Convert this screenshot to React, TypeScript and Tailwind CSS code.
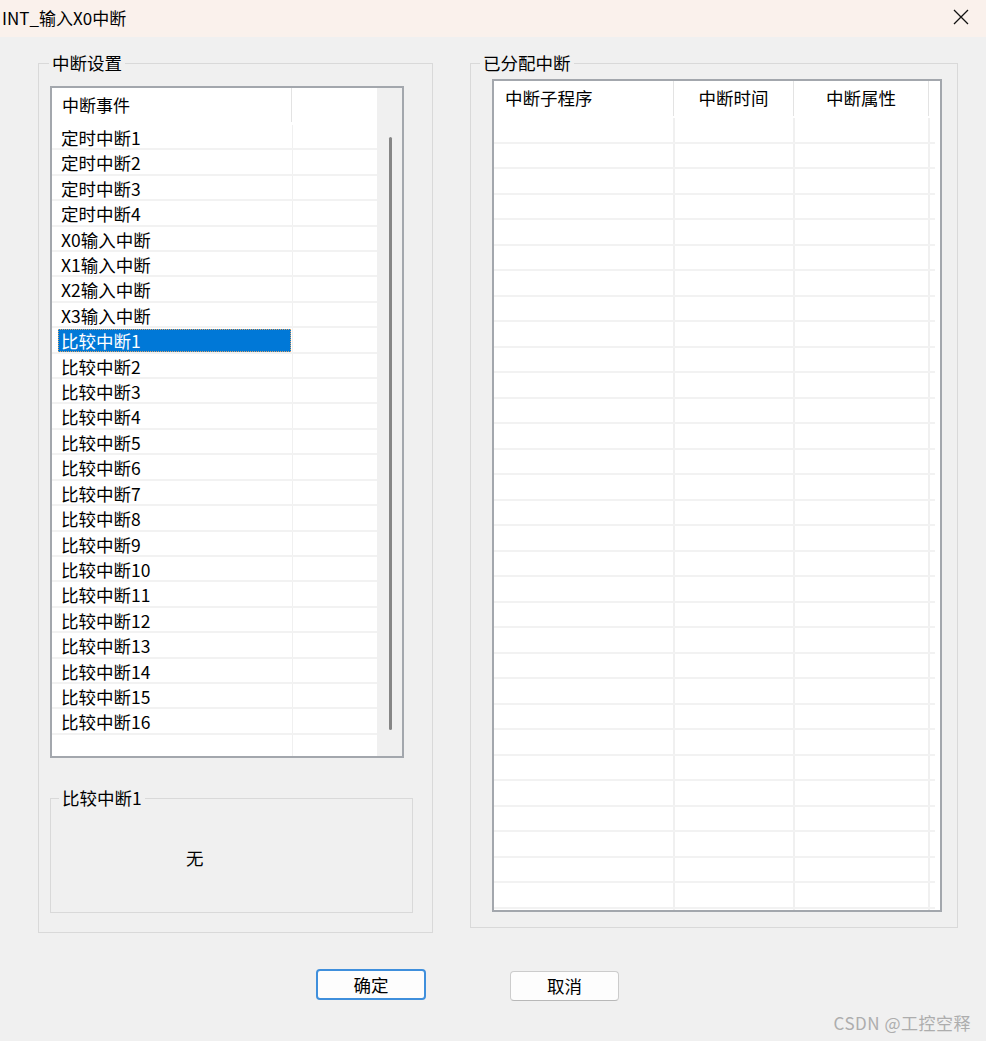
const FONT = '"Noto Sans CJK SC", "Noto Sans", sans-serif'

const events = [
  '定时中断1',
  '定时中断2',
  '定时中断3',
  '定时中断4',
  'X0输入中断',
  'X1输入中断',
  'X2输入中断',
  'X3输入中断',
  ...Array.from({ length: 16 }, (_, i) => `比较中断${i + 1}`),
]

const SELECTED = '比较中断1'

function EventList() {
  return (
    <div className="w-[354px] h-[672px] border-2 border-[#a3a7ad] bg-white flex overflow-hidden">
      {/* Columns */}
      <div className="w-[325px] flex flex-col">
        {/* Header */}
        <div className="h-[37px] flex shrink-0">
          <div className="w-[240px] flex items-center pl-[10px] text-[17px] text-black border-r border-[#e3e3e3] mb-[3px]">
            中断事件
          </div>
          <div className="flex-1" />
        </div>

        {/* Rows */}
        <div className="flex-1 flex flex-col">
          {events.map((name) => {
            const selected = name === SELECTED
            return (
              <div key={name} className="h-[25.42px] flex shrink-0 border-b-2 border-[#f2f2f2]">
                <div className="w-[241px] pl-[6px] pr-[1px] pt-px border-r border-[#f0f0f0]">
                  {selected ? (
                    <div className="h-[23px] bg-[#0078d7] outline-1 outline-dotted outline-[#d9a46a] -outline-offset-1 pl-[3px] text-white text-[17.5px] leading-[23px]">
                      {name}
                    </div>
                  ) : (
                    <div className="h-[23px] pl-[3px] text-[17.5px] leading-[23px] text-black">
                      {name}
                    </div>
                  )}
                </div>
                <div className="flex-1" />
              </div>
            )
          })}
          <div className="flex-1 flex">
            <div className="w-[241px] border-r border-[#f0f0f0]" />
          </div>
        </div>
      </div>

      {/* Scrollbar */}
      <div className="flex-1 bg-[#f0f0f0] flex justify-center pl-[1px] pt-[49px] pb-[26px]">
        <div className="w-[3px] h-full bg-[#868686] rounded-full" />
      </div>
    </div>
  )
}

function AssignedTable() {
  const cols = [
    { label: '中断子程序', w: 'w-[180px]', align: 'justify-start pl-[11px]' },
    { label: '中断时间', w: 'w-[120px]', align: 'justify-center' },
    { label: '中断属性', w: 'w-[135px]', align: 'justify-center' },
  ]
  return (
    <div className="w-[450px] h-[833px] border-2 border-[#a3a7ad] bg-white flex flex-col overflow-hidden">
      {/* Header */}
      <div className="h-[37px] flex shrink-0">
        {cols.map((c) => (
          <div
            key={c.label}
            className={`${c.w} flex items-center ${c.align} text-[17.5px] text-black border-r border-[#e3e3e3] mb-[2px]`}
          >
            {c.label}
          </div>
        ))}
        <div className="flex-1" />
      </div>

      {/* Body */}
      <div className="flex-1 flex flex-col overflow-hidden">
        {Array.from({ length: 32 }, (_, i) => (
          <div key={i} className="h-[25.5px] flex shrink-0 border-b-2 border-[#f2f2f2] mr-[5px]">
            <div className="w-[181px] border-r-2 border-[#f0f0f0]" />
            <div className="w-[120px] border-r-2 border-[#f0f0f0]" />
            <div className="w-[135px] border-r-2 border-[#f0f0f0]" />
            <div className="flex-1" />
          </div>
        ))}
      </div>
    </div>
  )
}

export default function App() {
  return (
    <div
      className="w-[986px] h-[1041px] bg-[#f0f0f0] relative overflow-hidden text-black"
      style={{ fontFamily: FONT }}
    >
      {/* Title bar */}
      <div className="h-[37px] bg-[#faf1ec] flex items-center justify-between pl-[2px] pr-[17px]">
        <span className="text-[17px] leading-none pb-[2px]">INT_输入X0中断</span>
        <svg width="16" height="16" viewBox="0 0 16 16" className="mb-[3px]">
          <path d="M1 1 L15 15 M15 1 L1 15" stroke="#111" strokeWidth="1.3" fill="none" />
        </svg>
      </div>

      {/* Group boxes */}
      <div className="flex items-start pl-[38px] pt-[14px] gap-[37px]">
        <fieldset className="w-[395px] h-[882px] border border-[#d9d9d9]">
          <legend className="ml-[10px] px-[3px] text-[17.5px] leading-[24px]">中断设置</legend>
          <div className="pl-[11px] pt-[11px]">
            <EventList />

            <fieldset className="w-[363px] h-[127px] mt-[28px] border border-[#d9d9d9]">
              <legend className="ml-[8px] px-[3px] text-[17.5px] leading-[24px]">比较中断1</legend>
              <div className="ml-[135px] mt-[36px] text-[17.5px] leading-[24px]">无</div>
            </fieldset>
          </div>
        </fieldset>

        <fieldset className="w-[488px] h-[877px] border border-[#d9d9d9]">
          <legend className="ml-[9px] px-[3px] text-[17.5px] leading-[24px]">已分配中断</legend>
          <div className="pl-[21px] pt-[4px]">
            <AssignedTable />
          </div>
        </fieldset>
      </div>

      {/* Buttons */}
      <div className="flex items-start pl-[316px] mt-[36px] gap-[84px]">
        <button className="w-[110px] h-[31px] rounded-[4px] border-2 border-[#3f8fdc] bg-[#fdfdfd] text-[17.5px] leading-none">
          确定
        </button>
        <button className="w-[109px] h-[30px] mt-[2px] rounded-[4px] border border-[#cccccc] border-b-[#b8b8b8] bg-[#fdfdfd] text-[17.5px] leading-none">
          取消
        </button>
      </div>

      {/* Watermark */}
      <div className="absolute right-[15px] bottom-[6px] text-[17px] tracking-[0.5px] text-[#adadad]">
        CSDN @工控空释
      </div>
    </div>
  )
}
